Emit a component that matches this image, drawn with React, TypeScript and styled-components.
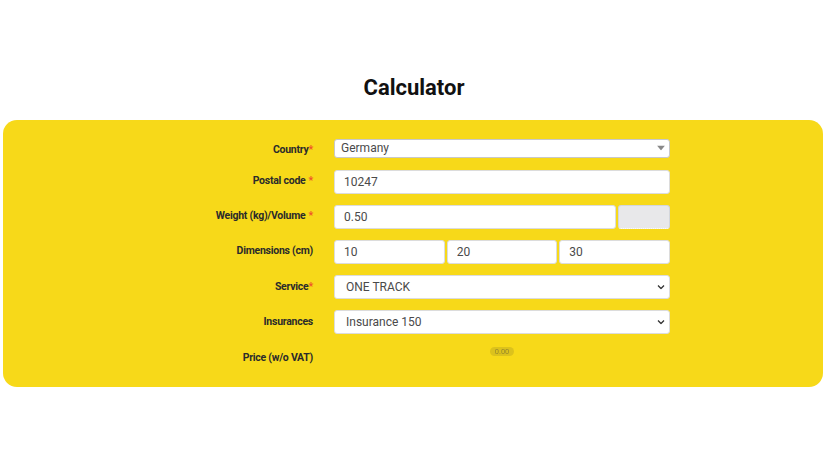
import styled, { createGlobalStyle } from 'styled-components'

const GlobalStyle = createGlobalStyle`
  body {
    margin: 0;
    background: #ffffff;
    font-family: Roboto, "Liberation Sans", Arial, sans-serif;
  }
`

const Page = styled.div`
  width: 828px;
  height: 466px;
  padding-top: 75px;
  box-sizing: border-box;
`

const Title = styled.h1`
  margin: 0 0 19px;
  text-align: center;
  font-size: 22px;
  line-height: 26px;
  font-weight: 700;
  color: #111;
`

const Panel = styled.div`
  margin: 0 5px 0 3px;
  background: #f7d919;
  border-radius: 14px;
  padding: 17px 0 18px;
  display: grid;
  grid-template-columns: 310px 336px;
  column-gap: 21px;
  row-gap: 11px;
`

const Label = styled.div<{ $tall?: boolean; $drop?: number }>`
  height: ${(p) => (p.$tall ? 22 : 24)}px;
  display: flex;
  align-items: center;
  justify-content: flex-end;
  padding-bottom: 3px;
  padding-top: ${(p) => p.$drop ?? 0}px;
  box-sizing: border-box;
  font-size: 10.5px;
  letter-spacing: -0.25px;
  font-weight: 700;
  color: #2b2b2b;
`

const Star = styled.span<{ $spaced?: boolean }>`
  color: #f0532b;
  margin-left: ${(p) => (p.$spaced ? 3 : 0)}px;
`

const Field = styled.div<{ $tall?: boolean }>`
  height: ${(p) => (p.$tall ? 22 : 24)}px;
  display: flex;
  align-items: center;
  gap: 2px;
  position: relative;
`

const Input = styled.input<{ $pad?: number }>`
  flex: 1;
  min-width: 0;
  height: 24px;
  box-sizing: border-box;
  border: 1px solid #dcdcdc;
  border-radius: 3px;
  background: #fff;
  padding: 0 0 0 ${(p) => p.$pad ?? 9}px;
  font-family: inherit;
  font-size: 12px;
  color: #4a4a4a;
  outline: none;
`

const Select = styled.select<{ $small?: boolean; $pad?: number }>`
  appearance: none;
  width: 100%;
  height: ${(p) => (p.$small ? 19 : 24)}px;
  box-sizing: border-box;
  border: 1px solid ${(p) => (p.$small ? '#c8c8c8' : '#dcdcdc')};
  border-radius: 3px;
  background: #fff;
  padding: 0 0 0 ${(p) => p.$pad ?? 11}px;
  font-family: inherit;
  font-size: 12px;
  color: #4a4a4a;
  outline: none;
`

const Caret = styled.svg`
  position: absolute;
  right: 5px;
  top: 50%;
  transform: translateY(-50%);
  pointer-events: none;
`

const UnitBox = styled.div`
  width: 52px;
  height: 24px;
  box-sizing: border-box;
  border: 1px solid #d3d6dc;
  border-bottom: 1px dotted #fff;
  border-radius: 3px;
  background: #e8e8ea;
`

const PriceRow = styled.div`
  height: 24px;
  display: flex;
  align-items: flex-start;
  justify-content: center;
`

const PricePill = styled.span`
  margin-top: 2px;
  padding: 1px 5px;
  border-radius: 5px;
  background: #dcc21c;
  color: #9a8a2a;
  font-size: 7.5px;
  line-height: 7px;
  filter: blur(0.7px);
`

export default function App() {
  return (
    <Page>
      <GlobalStyle />
      <Title>Calculator</Title>
      <Panel>
        <Label $tall $drop={6}>
          Country<Star>*</Star>
        </Label>
        <Field $tall>
          <Select $small $pad={6} defaultValue="de">
            <option value="de">Germany</option>
          </Select>
          <Caret width="8" height="5" viewBox="0 0 8 5">
            <path d="M0 0h8L4 5z" fill="#888" />
          </Caret>
        </Field>

        <Label>
          Postal code<Star $spaced>*</Star>
        </Label>
        <Field>
          <Input defaultValue="10247" />
        </Field>

        <Label>
          Weight (kg)/Volume<Star $spaced>*</Star>
        </Label>
        <Field>
          <Input defaultValue="0.50" />
          <UnitBox />
        </Field>

        <Label>Dimensions (cm)</Label>
        <Field>
          <Input defaultValue="10" />
          <Input defaultValue="20" />
          <Input defaultValue="30" />
        </Field>

        <Label $drop={2}>
          Service<Star>*</Star>
        </Label>
        <Field>
          <Select defaultValue="one">
            <option value="one">ONE TRACK</option>
          </Select>
          <Caret width="8" height="5" viewBox="0 0 8 5">
            <path d="M1 1l3 3 3-3" fill="none" stroke="#333" strokeWidth="1.3" />
          </Caret>
        </Field>

        <Label $drop={2}>Insurances</Label>
        <Field>
          <Select defaultValue="150">
            <option value="150">Insurance 150</option>
          </Select>
          <Caret width="8" height="5" viewBox="0 0 8 5">
            <path d="M1 1l3 3 3-3" fill="none" stroke="#333" strokeWidth="1.3" />
          </Caret>
        </Field>

        <Label $drop={4}>Price (w/o VAT)</Label>
        <PriceRow>
          <PricePill>0.00</PricePill>
        </PriceRow>
      </Panel>
    </Page>
  )
}
